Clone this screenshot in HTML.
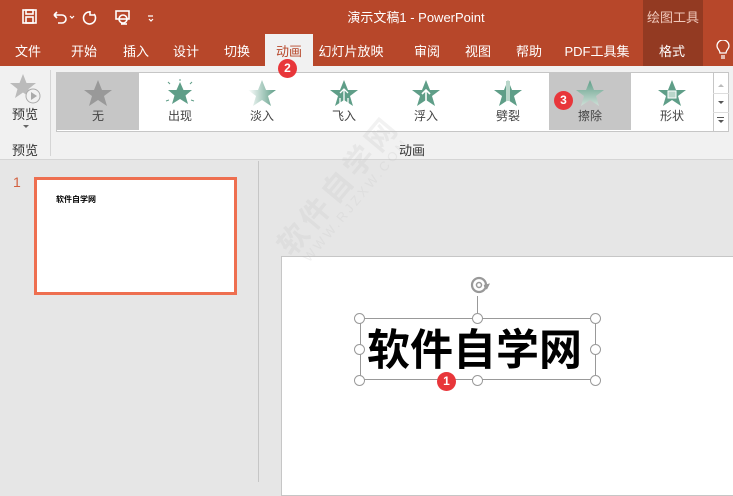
<!DOCTYPE html>
<html><head><meta charset="utf-8"><style>
*{margin:0;padding:0;box-sizing:border-box}
body{width:733px;height:482px;overflow:hidden;position:relative;background:#e6e6e6;font-family:"Liberation Sans","Noto Sans CJK SC",sans-serif;font-size:13px}
.a{position:absolute}
.t{color:#fff;white-space:nowrap;transform:translateX(-50%)}
.badge{position:absolute;width:19px;height:19px;border-radius:50%;background:#e8363a;color:#fff;font-size:12px;text-align:center;line-height:19px;font-weight:bold}
.it{position:absolute;top:73px;width:82px;height:57px;text-align:center}
.it span{position:absolute;top:34px;left:0;width:100%;font-size:12px;color:#444}
.it svg{position:absolute;left:26px;top:6px}
.h{position:absolute;width:11px;height:11px;border:1.5px solid #999;border-radius:50%;background:#fff}
</style></head><body>
<div class="a" style="left:0;top:0;width:733px;height:66px;background:#b7472a"></div>
<div class="a" style="left:643px;top:0;width:60px;height:66px;background:#933a22"></div>
<div class="a t" style="left:673px;top:7px;color:#f0c8bb">绘图工具</div>
<div class="a t" style="left:416px;top:7px">演示文稿1 - PowerPoint</div>
<svg class="a" style="left:20px;top:7px" width="140" height="20" viewBox="0 0 140 20" fill="none" stroke="#fff" stroke-width="1.6">
<rect x="3" y="3" width="13" height="13"/><rect x="6" y="3" width="7" height="4"/><rect x="6" y="10" width="7" height="6"/>
<path d="M34 8h8a4 4 0 0 1 0 8h-4M34 8l3-3M34 8l3 3"/><path d="M50 9l2 2 2-2" stroke-width="1.2"/>
<path d="M70 5a6 6 0 1 0 4 2M70 4v4h4" />
<rect x="96" y="4" width="13" height="8"/><circle cx="103" cy="12" r="4"/><path d="M101 17h6"/>
<path d="M128 9h5M129 12l2 2 2-2" stroke-width="1.2"/>
</svg>
<div class="a" style="left:265px;top:34px;width:48px;height:32px;background:#f1f1f1"></div>
<div class="a t" style="left:28px;top:41px">文件</div>
<div class="a t" style="left:84px;top:41px">开始</div>
<div class="a t" style="left:136px;top:41px">插入</div>
<div class="a t" style="left:186px;top:41px">设计</div>
<div class="a t" style="left:237px;top:41px">切换</div>
<div class="a t" style="left:289px;top:41px;color:#b7472a">动画</div>
<div class="a t" style="left:351px;top:41px">幻灯片放映</div>
<div class="a t" style="left:427px;top:41px">审阅</div>
<div class="a t" style="left:478px;top:41px">视图</div>
<div class="a t" style="left:529px;top:41px">帮助</div>
<div class="a t" style="left:597px;top:41px">PDF工具集</div>
<div class="a t" style="left:672px;top:41px">格式</div>
<svg class="a" style="left:716px;top:40px" width="14" height="20" fill="none" stroke="#fff" stroke-width="1.3"><path d="M4 13c0-3-3-4-3-7a6 6 0 0 1 12 0c0 3-3 4-3 7zM5 16h4M5 18h4"/></svg>
<div class="a" style="left:0;top:66px;width:733px;height:94px;background:#f1f1f1;border-bottom:1px solid #d5d5d5"></div>
<div class="a" style="left:50px;top:70px;width:1px;height:86px;background:#d5d5d5"></div>
<svg class="a" style="left:9px;top:72px" width="34" height="34"><polygon points="14,2 17.5,11 27,11 19.5,17 22,26 14,20.5 6,26 8.5,17 1,11 10.5,11" fill="#bbb"/><circle cx="24" cy="24" r="7" fill="#f1f1f1" stroke="#aaa"/><path d="M22 20v8l6-4z" fill="#aaa"/></svg>
<div class="a t" style="left:25px;top:104px;color:#333">预览</div>
<div class="a" style="left:23px;top:125px;border:3px solid transparent;border-top:3px solid #666"></div>
<div class="a t" style="left:25px;top:140px;color:#333">预览</div>
<div class="a t" style="left:412px;top:140px;color:#333">动画</div>
<div class="a" style="left:56px;top:72px;width:673px;height:60px;background:#fff;border:1px solid #c6c6c6"></div>
<div class="a" style="left:713px;top:72px;width:16px;height:60px;border:1px solid #c6c6c6;background:#fff"></div>
<div class="a" style="left:713px;top:93px;width:16px;height:1px;background:#ddd"></div>
<div class="a" style="left:713px;top:112px;width:16px;height:1px;background:#ddd"></div>
<div class="a" style="left:57px;top:73px;width:82px;height:57px;background:#c6c6c6"></div>
<div class="a" style="left:549px;top:73px;width:82px;height:57px;background:#c6c6c6"></div>
<div class="it" style="left:57px"><svg width="30" height="28"><polygon points="15,1 19,11 29,11 21,17 24,27 15,21 6,27 9,17 1,11 11,11" fill="#999"/></svg><span>无</span></div>
<div class="it" style="left:139px"><svg width="30" height="28"><polygon points="15,3 18.5,11 27,11 20.5,16.5 23,25 15,20 7,25 9.5,16.5 3,11 11.5,11" fill="#5f9e88"/><path d="M15 0v2M3 3l2 2M27 3l-2 2M1 22l3-1M29 22l-3-1" stroke="#5f9e88"/></svg><span>出现</span></div>
<div class="it" style="left:221px"><svg width="30" height="28"><defs><linearGradient id="g" x1="0" x2="1"><stop offset="0" stop-color="#fff"/><stop offset="1" stop-color="#5f9e88"/></linearGradient></defs><polygon points="15,1 19,11 29,11 21,17 24,27 15,21 6,27 9,17 1,11 11,11" fill="url(#g)"/></svg><span>淡入</span></div>
<div class="it" style="left:303px"><svg width="30" height="28"><polygon points="15,1 19,11 29,11 21,17 24,27 15,21 6,27 9,17 1,11 11,11" fill="#5f9e88"/><path d="M15 25V10M11 14l4-4 4 4M11 25v-6M19 25v-6" stroke="#fff" stroke-width="1.3" fill="none"/></svg><span>飞入</span></div>
<div class="it" style="left:385px"><svg width="30" height="28"><polygon points="15,1 19,11 29,11 21,17 24,27 15,21 6,27 9,17 1,11 11,11" fill="#5f9e88"/><path d="M15 22V11M11 15l4-4 4 4" stroke="#fff" stroke-width="1.6" fill="none"/></svg><span>浮入</span></div>
<div class="it" style="left:467px"><svg width="30" height="28"><polygon points="15,1 19,11 29,11 21,17 24,27 15,21 6,27 9,17 1,11 11,11" fill="#5f9e88"/><rect x="13" y="2" width="4" height="20" fill="#b9d6ca"/></svg><span>劈裂</span></div>
<div class="it" style="left:549px"><svg width="30" height="28"><defs><linearGradient id="g2" x1="0" x2="0" y1="0" y2="1"><stop offset="0" stop-color="#5f9e88"/><stop offset="1" stop-color="#cfe0d8"/></linearGradient></defs><polygon points="15,1 19,11 29,11 21,17 24,27 15,21 6,27 9,17 1,11 11,11" fill="url(#g2)"/></svg><span>擦除</span></div>
<div class="it" style="left:631px"><svg width="30" height="28"><polygon points="15,1 19,11 29,11 21,17 24,27 15,21 6,27 9,17 1,11 11,11" fill="#5f9e88"/><rect x="11" y="12" width="8" height="7" fill="#b9d6ca" stroke="#fff"/></svg><span>形状</span></div>
<div class="a" style="left:718px;top:81px;border:3px solid transparent;border-bottom:3px solid #bbb"></div>
<div class="a" style="left:718px;top:101px;border:3px solid transparent;border-top:3px solid #555"></div>
<div class="a" style="left:717px;top:117px;width:7px;height:1px;background:#555"></div>
<div class="a" style="left:718px;top:120px;border:3px solid transparent;border-top:3px solid #555"></div>
<div class="a" style="left:258px;top:161px;width:1px;height:321px;background:#c6c6c6"></div>
<div class="a" style="left:13px;top:174px;color:#d2603f;font-size:14px">1</div>
<div class="a" style="left:34px;top:177px;width:203px;height:118px;background:#fff;border:3px solid #ee6f50"></div>
<div class="a" style="left:56px;top:194px;font-size:8px;font-weight:bold;color:#000">软件自学网</div>
<div class="a" style="left:281px;top:256px;width:460px;height:240px;background:#fff;border:1px solid #c6c6c6"></div>
<div class="a" style="left:265px;top:235px;transform:rotate(-50deg);transform-origin:left top;color:rgba(190,190,190,0.2);font-size:30px;white-space:nowrap;font-weight:bold;letter-spacing:4px">软件自学网</div>
<div class="a" style="left:300px;top:255px;transform:rotate(-50deg);transform-origin:left top;color:rgba(190,190,190,0.2);font-size:13px;white-space:nowrap;letter-spacing:3px">WWW.RJZXW.COM</div>
<div class="a" style="left:360px;top:318px;width:236px;height:62px;border:1px solid #999"></div>
<div class="a" style="left:477px;top:296px;width:1px;height:22px;background:#999"></div>
<svg class="a" style="left:468px;top:274px" width="26" height="22" fill="none" stroke="#999" stroke-width="2.2"><circle cx="11" cy="11" r="7"/><circle cx="11" cy="11" r="2.5" stroke-width="1.5"/><path d="M16 12l4-1-2 4"/></svg>
<div class="a" style="left:367px;top:318px;font-size:43px;font-weight:bold;color:#000;white-space:nowrap;line-height:58px;font-family:'Noto Sans CJK SC',sans-serif">软件自学网</div>
<div class="h" style="left:354px;top:313px"></div><div class="h" style="left:472px;top:313px"></div><div class="h" style="left:590px;top:313px"></div>
<div class="h" style="left:354px;top:344px"></div><div class="h" style="left:590px;top:344px"></div>
<div class="h" style="left:354px;top:375px"></div><div class="h" style="left:472px;top:375px"></div><div class="h" style="left:590px;top:375px"></div>
<div class="badge" style="left:437px;top:372px">1</div>
<div class="badge" style="left:278px;top:59px">2</div>
<div class="badge" style="left:554px;top:91px">3</div>
</body></html>
